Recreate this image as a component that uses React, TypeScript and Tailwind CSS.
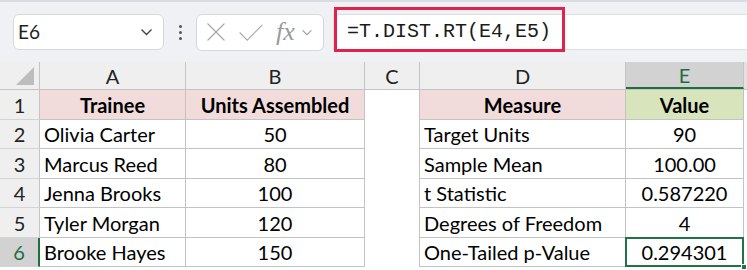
import React from 'react';

const cols = ['A', 'B', 'C', 'D', 'E'];
const colW = ['w-[146px]', 'w-[179px]', 'w-[55px]', 'w-[206px]', 'w-[118px]'];
const rowH = ['h-[30px]', 'h-[29px]', 'h-[30px]', 'h-[29px]', 'h-[30px]', 'h-[29px]'];

const trainees = [
  ['Olivia Carter', '50'],
  ['Marcus Reed', '80'],
  ['Jenna Brooks', '100'],
  ['Tyler Morgan', '120'],
  ['Brooke Hayes', '150'],
];

const measures = [
  ['Target Units', '90'],
  ['Sample Mean', '100.00'],
  ['t Statistic', '0.587220'],
  ['Degrees of Freedom', '4'],
  ['One-Tailed p-Value', '0.294301'],
];

function Chevron({ className }: { className?: string }) {
  return (
    <svg viewBox="0 0 12 8" className={className} fill="none" stroke="currentColor" strokeWidth="1.4">
      <path d="M1 1.5 L6 6.5 L11 1.5" />
    </svg>
  );
}

function Toolbar() {
  return (
    <div className="relative h-[62px] bg-[#eff1f4] border-t-2 border-[#d9dce0] flex items-center pl-[13px]">
      {/* name box */}
      <div className="w-[151px] h-[36px] bg-white border border-[#d6d8db] rounded-md flex items-center justify-between pl-[4px] pr-[10px]">
        <span className="text-[19px] text-[#1f1f1f]">E6</span>
        <Chevron className="w-[13px] h-[8px] text-[#444]" />
      </div>
      {/* dots */}
      <div className="w-[32px] flex flex-col items-center gap-[3px]">
        <span className="w-[3px] h-[3px] rounded-full bg-[#555]" />
        <span className="w-[3px] h-[3px] rounded-full bg-[#555]" />
        <span className="w-[3px] h-[3px] rounded-full bg-[#555]" />
      </div>
      {/* fx box */}
      <div className="w-[128px] h-[37px] bg-white border border-[#d6d8db] rounded-md flex items-center pl-[9px] pr-[5px]">
        <svg viewBox="0 0 20 20" className="w-[20px] h-[20px] text-[#a9a9a9]" fill="none" stroke="currentColor" strokeWidth="1.2">
          <path d="M1.5 1.5 L18.5 18.5 M18.5 1.5 L1.5 18.5" />
        </svg>
        <svg viewBox="0 0 26 20" className="w-[26px] h-[19px] ml-[12px] text-[#a9a9a9]" fill="none" stroke="currentColor" strokeWidth="1.2">
          <path d="M1 10 L9 18 L25 2" />
        </svg>
        <span className="ml-[12px] text-[26px] italic text-[#9a9a9a] leading-none" style={{ fontFamily: '"Liberation Serif", serif' }}>
          fx
        </span>
        <Chevron className="ml-[6px] w-[12px] h-[7px] text-[#a0a0a0]" />
      </div>
      {/* formula area */}
      <div className="ml-[9px] flex-1 h-[36px] bg-white border-l border-y border-[#dcdfe2] flex items-center pl-[13px]">
        <span className="text-[20px] text-[#1a1a1a]" style={{ fontFamily: '"Liberation Mono", monospace' }}>
          =T.DIST.RT(E4,E5)
        </span>
      </div>
      <div className="absolute left-[334px] top-[5px] w-[231px] h-[45px] border-[3px] border-[#e0224c]" />
    </div>
  );
}

function HeaderRow() {
  return (
    <div className="flex h-[28px] bg-[#efefef] border-b border-[#c4c4c4]">
      <div className="w-[40px] border-r border-[#c4c4c4] flex items-end justify-end pr-[5px] pb-[4px]">
        <svg viewBox="0 0 18 18" className="w-[18px] h-[18px]">
          <path d="M18 0 L18 18 L0 18 Z" fill="#bdbdbd" />
        </svg>
      </div>
      {cols.map((c, i) => {
        const sel = c === 'E';
        return (
          <div
            key={c}
            className={`${colW[i]} border-r border-[#c4c4c4] flex items-center justify-center text-[20px] ${
              sel ? 'bg-[#d2d2d2] text-[#1e6e42] border-b-2 border-b-[#1e6e42]' : 'text-[#222]'
            }`}
          >
            {c}
          </div>
        );
      })}
      <div className="flex-1 bg-[#e2e2e2]" />
    </div>
  );
}

function Row({ idx }: { idx: number }) {
  const h = rowH[idx];
  const isHead = idx === 0;
  const sel = idx === 5;
  const left = isHead ? ['Trainee', 'Units Assembled'] : trainees[idx - 1];
  const right = isHead ? ['Measure', 'Value'] : measures[idx - 1];
  const cell = 'border-r border-b border-[#c3c3c3] flex items-center';
  return (
    <div className={`flex ${h}`}>
      <div
        className={`w-[40px] flex items-center justify-center text-[20px] border-b border-[#d4d4d4] ${
          sel ? 'bg-[#d2d2d2] text-[#1e6e42] border-r-2 border-r-[#1e6e42]' : 'bg-[#efefef] text-[#222] border-r border-r-[#c4c4c4]'
        }`}
      >
        {idx + 1}
      </div>
      <div className={`${colW[0]} ${cell} ${isHead ? 'bg-[#f2dcdb] justify-center font-bold' : 'pl-[4px]'}`}>{left[0]}</div>
      <div className={`${colW[1]} ${cell} justify-center ${isHead ? 'bg-[#f2dcdb] font-bold' : ''}`}>{left[1]}</div>
      <div className={`${colW[2]} border-r border-[#c3c3c3]`} />
      <div className={`${colW[3]} ${cell} ${isHead ? 'bg-[#f2dcdb] justify-center font-bold' : 'pl-[4px]'}`}>{right[0]}</div>
      <div className={`${colW[4]} ${cell} justify-center relative ${isHead ? 'bg-[#d8e4bc] font-bold' : ''}`}>
        {right[1]}
        {sel && (
          <>
            <div className="absolute -left-px -top-px -right-px -bottom-px border-2 border-[#217346]" />
            <div className="absolute -right-[4px] -bottom-[4px] w-[6px] h-[6px] bg-[#217346] border border-white" />
          </>
        )}
      </div>
      <div className="flex-1" />
    </div>
  );
}

export default function App() {
  return (
    <div className="w-[747px] h-[270px] overflow-hidden bg-white" style={{ fontFamily: 'Lato, "Liberation Sans", sans-serif' }}>
      <Toolbar />
      <HeaderRow />
      <div className="text-[20px] text-black">
        {[0, 1, 2, 3, 4, 5].map((i) => (
          <Row key={i} idx={i} />
        ))}
      </div>
    </div>
  );
}
